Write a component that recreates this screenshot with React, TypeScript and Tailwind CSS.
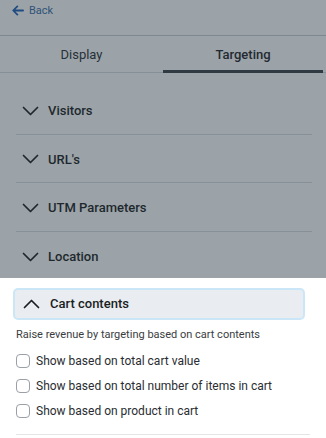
import { useState } from 'react';

const Chevron = ({ up = false }: { up?: boolean }) => (
  <svg width="17" height="10" viewBox="0 0 17 10" fill="none" className="shrink-0">
    <path
      d={up ? 'M1.5 8.5L8.5 1.5L15.5 8.5' : 'M1.5 1.5L8.5 8.5L15.5 1.5'}
      stroke="#1a1d21"
      strokeWidth="1.7"
      strokeLinecap="round"
      strokeLinejoin="round"
    />
  </svg>
);

const sections = ['Visitors', "URL's", 'UTM Parameters', 'Location'];

const options = [
  'Show based on total cart value',
  'Show based on total number of items in cart',
  'Show based on product in cart',
];

export default function App() {
  const [checked, setChecked] = useState<boolean[]>([false, false, false]);

  return (
    <div className="relative w-[326px] h-[438px] overflow-hidden bg-white text-[#1f2328] font-['Roboto',sans-serif]">
      {/* page behind the sheet */}
      <div className="flex items-start gap-[5px] h-[36px] px-[12px] pt-[4px] border-b border-[#c9ced3]">
        <svg width="12" height="11" viewBox="0 0 13 11" fill="none" className="mt-[1px]">
          <path d="M12 5.5H1.8M5.8 1L1.3 5.5L5.8 10" stroke="#1d5fb8" strokeWidth="1.9" strokeLinecap="round" strokeLinejoin="round" />
        </svg>
        <span className="text-[11px] text-[#3a6ea8] leading-[13px]">Back</span>
      </div>

      <div className="grid grid-cols-2 h-[37px] border-b border-[#d6dade]">
        <button className="flex items-center justify-center text-[13px] pt-[2px] text-[#2a2e33]">Display</button>
        <button className="flex items-center justify-center text-[13px] font-medium text-[#1f2328] border-b-[3px] border-[#3a4048] mb-[-1px] mr-[3px] pt-[3px]">
          Targeting
        </button>
      </div>

      <div className="px-4 pr-[14px] pt-[13px]">
        {sections.map((s, i) => (
          <div
            key={s}
            className={`flex items-center gap-[9px] h-[48.5px] pl-[6px] pt-[2px] ${i < sections.length - 1 ? 'border-b border-[#d9dde1]' : ''}`}
          >
            <Chevron />
            <span className="text-[13px] font-medium text-[#1a1d21]">{s}</span>
          </div>
        ))}
      </div>

      {/* scrim */}
      <div className="absolute inset-0 bg-[rgba(36,50,62,0.45)]" />

      {/* bottom sheet */}
      <div className="absolute left-0 right-0 bottom-0 h-[160px] bg-white px-[13px] pt-[10px]">
        <div className="flex items-center gap-[10px] h-[32px] w-[292px] pl-[8px] rounded-[5px] bg-[#e9edf2] border-2 border-[#cbe7f7]">
          <Chevron up />
          <span className="text-[13px] font-medium text-[#1a1d21]">Cart contents</span>
        </div>

        <p className="mt-[7px] pl-[3px] text-[11px] leading-[15px] text-[#3a3d41]">Raise revenue by targeting based on cart contents</p>

        <div className="mt-[11px] pl-[3px] flex flex-col gap-[10px]">
          {options.map((o, i) => (
            <label key={o} className="flex items-center gap-[6px] h-[15px] cursor-pointer">
              <input
                type="checkbox"
                checked={checked[i]}
                onChange={() => setChecked(checked.map((c, j) => (j === i ? !c : c)))}
                className="appearance-none w-[14px] h-[14px] rounded-[4px] border border-[#9aa0a6] bg-white checked:bg-[#1d5fb8] checked:border-[#1d5fb8]"
              />
              <span className="text-[12px] text-[#2a2d31]">{o}</span>
            </label>
          ))}
        </div>

        <div className="mt-[16px] ml-[3px] mr-[3px] border-t border-[#e3e5e8]" />
      </div>
    </div>
  );
}
